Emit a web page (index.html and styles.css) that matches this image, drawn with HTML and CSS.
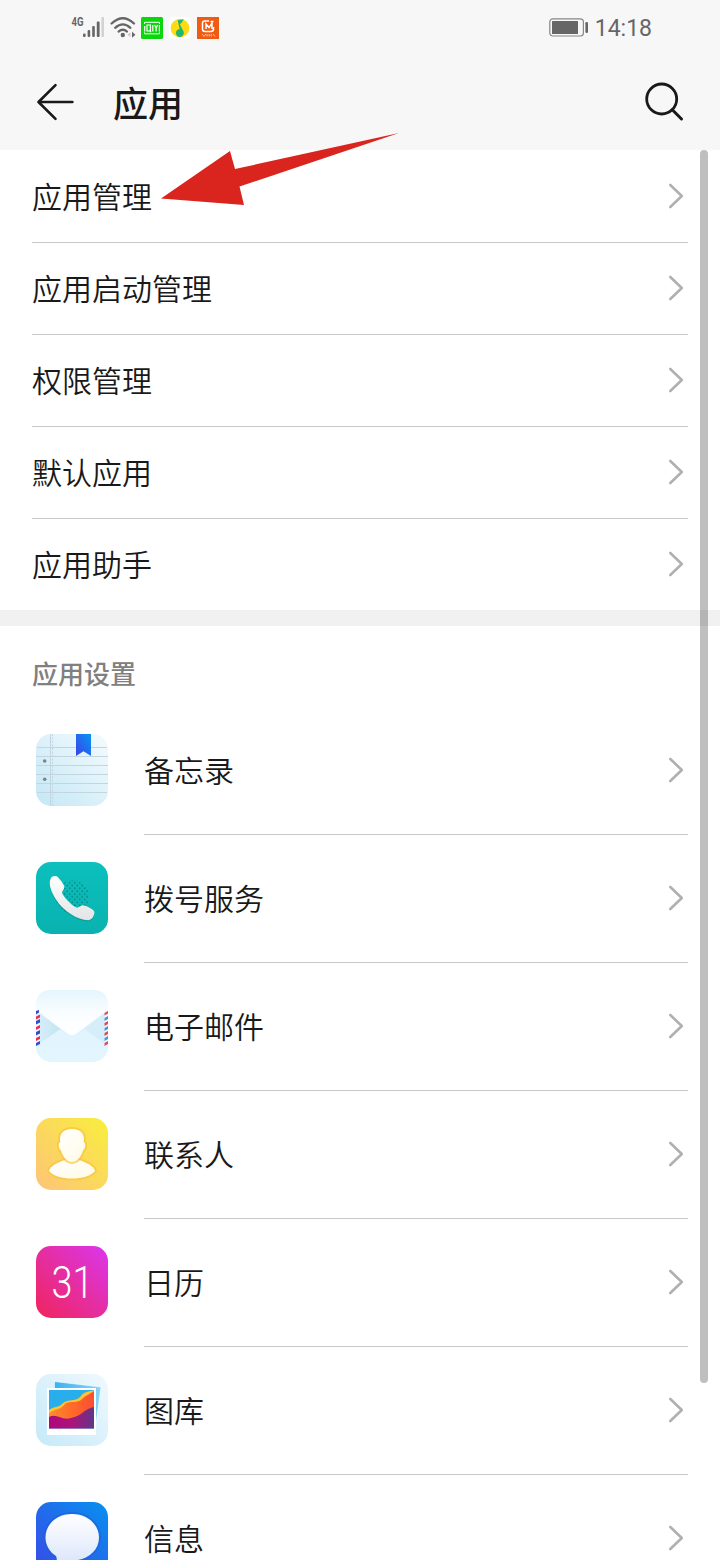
FILE: index.html
```html
<!DOCTYPE html>
<html lang="zh-CN">

<head>
    <meta charset="UTF-8">
    <meta name="viewport" content="width=device-width, initial-scale=1.0">
    <title>应用</title>
    <link rel="stylesheet" href="styles.css">
</head>

<body>
    <svg class="defs" width="0" height="0">
        <symbol id="chevron" viewBox="0 0 16 26">
            <path d="M2.3 2 L13.8 13 L2.3 24" fill="none" stroke="#b0b0b0" stroke-width="2.6" stroke-linecap="round" stroke-linejoin="round" />
        </symbol>
    </svg>

    <div class="screen">
        <header class="top">
            <div class="status-bar">
                <svg class="signal" width="36" height="28" viewBox="0 -4 36 28">
                    <text x="1.5" y="10" textLength="12" lengthAdjust="spacingAndGlyphs">4G</text>
                    <g fill="#666">
                        <rect x="13" y="17.5" width="2.6" height="3.5" rx="1" />
                        <rect x="17.6" y="14" width="2.6" height="7" rx="1" />
                        <rect x="22.2" y="10" width="2.6" height="11" rx="1" />
                        <rect x="26.8" y="5.5" width="2.8" height="15.5" rx="1" />
                        <rect x="31.4" y="1" width="2.6" height="20" rx="1" fill="#d2d2d2" />
                    </g>
                </svg>
                <svg class="wifi" width="27" height="24" viewBox="0 0 27 24">
                    <g fill="none" stroke="#666" stroke-width="2.3" stroke-linecap="round">
                        <path d="M1.6 7.5 Q12.8 -3 24 7.5" />
                        <path d="M5.2 11.8 Q12.8 5 20.4 11.8" />
                        <path d="M8.6 15.6 Q12.8 12 17 15.6" />
                    </g>
                    <circle cx="12.8" cy="19" r="2.2" fill="#666" />
                    <path d="M20.4 16.3v5l-3-2.5z" fill="#ccc" />
                    <path d="M22 15.8v6l3.4-3z" fill="#666" />
                </svg>
                <svg class="app-badge" width="22" height="22" viewBox="0 0 22 22">
                    <rect width="22" height="22" rx="1.5" fill="#0bd60b" />
                    <path d="M3.5 7V5.3H18.5V7M18.5 15.3v1.5H3.5v-1.5" fill="none" stroke="#fff" stroke-width="1" />
                    <path d="M3.7 9v5.5M6 8h3.4v6H6zM8.6 13l1.4 2.3M11.8 8v6.5M13.6 8l1.5 3 1.5-3M15.1 11v3.5M18.4 8v6.5" fill="none" stroke="#fff" stroke-width="1.2" />
                </svg>
                <svg class="app-badge" width="22" height="22" viewBox="0 0 22 22">
                    <rect width="22" height="22" rx="3" fill="#fff" />
                    <circle cx="11" cy="11" r="9.3" fill="#fddc12" />
                    <path d="M8.7 3.2 14.8 2.3 12.8 5.6 10.9 7.2 14 13.5A4 4 0 1 1 10.6 12z" fill="#22b573" />
                </svg>
                <svg class="app-badge" width="22" height="22" viewBox="0 0 22 22">
                    <rect width="22" height="22" fill="#f05a12" />
                    <path d="M12 4H7.5Q5.5 4 5.5 6V12Q5.5 14.5 8 14.5H14Q16.5 14.5 16.5 12V10" fill="none" stroke="#fff" stroke-width="1.5" />
                    <path d="M9 12V7l3 3.6L15 6.2V12M13.5 4.5h3" fill="none" stroke="#fff" stroke-width="1.5" />
                    <path d="M5 17l2 2.4M9 17l-2 2.4M10 17v2.5M12.2 17v2.5M14.2 17v2.5M16 17l2 2.5" stroke="#ffd0b5" stroke-width=".9" />
                </svg>
                <svg class="battery" width="40" height="20" viewBox="0 0 40 20">
                    <rect x=".8" y=".8" width="33.6" height="17.2" rx="3" fill="none" stroke="#888" stroke-width="1.2" />
                    <rect x="3" y="3" width="26" height="13" rx=".6" fill="#666" />
                    <rect x="36.4" y="4" width="2.6" height="11" rx="1.2" fill="#666" />
                </svg>
                <span class="time">14:18</span>
            </div>
            <div class="title-bar">
                <svg class="back" width="40" height="40" viewBox="0 0 40 40">
                    <path d="M19.5 3.2 2.5 20 19.5 36.8M2.8 20H36.4" fill="none" stroke="#191919" stroke-width="2.6" stroke-linecap="round" stroke-linejoin="round" />
                </svg>
                <h1>应用</h1>
                <svg class="search" width="40" height="40" viewBox="0 0 40 40">
                    <circle cx="17.7" cy="17" r="15" fill="none" stroke="#191919" stroke-width="2.8" />
                    <path d="M28.3 27.8 37.5 37" stroke="#191919" stroke-width="3" stroke-linecap="round" />
                </svg>
            </div>
        </header>

        <ul class="menu">
            <li><span>应用管理</span><svg class="chevron"><use href="#chevron" /></svg></li>
            <li><span>应用启动管理</span><svg class="chevron"><use href="#chevron" /></svg></li>
            <li><span>权限管理</span><svg class="chevron"><use href="#chevron" /></svg></li>
            <li><span>默认应用</span><svg class="chevron"><use href="#chevron" /></svg></li>
            <li><span>应用助手</span><svg class="chevron"><use href="#chevron" /></svg></li>
        </ul>

        <div class="separator"></div>

        <h2>应用设置</h2>

        <ul class="apps">
            <li>
                <!-- notepad -->
                <svg class="app-icon" viewBox="0 0 72 72">
                    <defs>
                        <linearGradient id="note" x1="1" y1="0" x2="0" y2="1">
                            <stop offset="0" stop-color="#f5fbfe" />
                            <stop offset="1" stop-color="#c3e7f6" />
                        </linearGradient>
                        <linearGradient id="mark" x1="1" y1="0" x2="0" y2="1">
                            <stop offset="0" stop-color="#0795f2" />
                            <stop offset="1" stop-color="#3b42ea" />
                        </linearGradient>
                    </defs>
                    <rect width="72" height="72" rx="15" fill="url(#note)" />
                    <path d="M1 13.5H71M0 22.5H72M0 31.5H72M0 40.5H72M0 49.5H72M1 58.5H71" stroke="#c3d6df" />
                    <path d="M14.5 0V72" stroke="#c3d6df" />
                    <path d="M16.5 0V72" stroke="#c3d6df" stroke-dasharray="2 1.5" />
                    <circle cx="8.7" cy="27" r="1.8" fill="#74878f" />
                    <circle cx="8.7" cy="45.2" r="1.8" fill="#74878f" />
                    <path d="M40 0H55V22L47.5 17.3 40 22z" fill="url(#mark)" />
                </svg>
                <div class="app-row"><span>备忘录</span><svg class="chevron"><use href="#chevron" /></svg></div>
            </li>
            <li>
                <!-- phone -->
                <svg class="app-icon" viewBox="0 0 72 72">
                    <defs>
                        <linearGradient id="dial" x1="0" y1="0" x2="0" y2="1">
                            <stop offset="0" stop-color="#0cc0bd" />
                            <stop offset="1" stop-color="#09b2af" />
                        </linearGradient>
                        <linearGradient id="handset" x1="0" y1="0" x2="0" y2="1">
                            <stop offset="0" stop-color="#fff" />
                            <stop offset="1" stop-color="#e2e4e5" />
                        </linearGradient>
                        <pattern id="holes" width="5" height="5.6" patternUnits="userSpaceOnUse">
                            <circle cx="1.2" cy="1.2" r=".9" fill="#058886" />
                            <circle cx="3.7" cy="4" r=".9" fill="#058886" />
                        </pattern>
                        <path id="tel" d="M15 16C16 13.800 20 13.200 22 15.200C24.500 18 27 21 28.300 24.300C29 26.500 26.500 28.500 26 30.800C27 34 34 42.500 40.500 45.600C42.500 46.300 44.500 43 47 43.200C51 44 55.500 46.300 58 49C59.500 52 56.500 57.800 52.500 58.200C42 58.400 27 49 20 37.500C16 31 11.500 22 15 16Z" />
                    </defs>
                    <rect width="72" height="72" rx="15" fill="url(#dial)" />
                    <circle cx="36.5" cy="35" r="16.8" fill="url(#holes)" />
                    <use href="#tel" y="1.2" fill="#078f8c" opacity=".55" />
                    <use href="#tel" fill="url(#handset)" />
                </svg>
                <div class="app-row"><span>拨号服务</span><svg class="chevron"><use href="#chevron" /></svg></div>
            </li>
            <li>
                <!-- mail -->
                <svg class="app-icon" viewBox="0 0 72 72">
                    <defs>
                        <linearGradient id="mail" x1="0" y1="0" x2="0" y2="1">
                            <stop offset="0" stop-color="#dff4fd" />
                            <stop offset="1" stop-color="#e3f5fd" />
                        </linearGradient>
                        <linearGradient id="flap" x1="0" y1="0" x2="0" y2="1">
                            <stop offset="0" stop-color="#e4f6fe" />
                            <stop offset=".5" stop-color="#fafdff" />
                            <stop offset="1" stop-color="#fff" />
                        </linearGradient>
                        <linearGradient id="side">
                            <stop offset="0" stop-color="#d8eff9" />
                            <stop offset="1" stop-color="#c3e5f2" />
                        </linearGradient>
                    </defs>
                    <rect width="72" height="72" rx="15" fill="url(#mail)" />
                    <path d="M0 20.5L24.5 39L0 56z" fill="url(#side)" />
                    <path d="M72 20.5L48 39L72 56z" fill="#d5eef9" />
                    <path d="M0 20.5V15Q0 0 15 0H57Q72 0 72 15V20.5L40 44.5Q36 47.5 32 44.5z" fill="url(#flap)" />
                    <path d="M0 20.5L32 44.5Q36 47.5 40 44.5L72 20.5" fill="none" stroke="#cfeaf5" stroke-width=".6" />
                    <path d="M0 21H4V55H0zM68.5 20H72V56H68.5z" fill="#f3f8fd" />
                    <path d="M0 21l3-1v2.5l-3 2zM0 31l4-2v3.500l-4 2zM0 42l4-2v3.500l-4 2zM0 53l4-2v3l-4 2z" fill="#2f4fd0" />
                    <path d="M0 26.500l4-2v3l-4 2zM0 37l4-2v3l-4 2zM0 48l4-2v3l-4 2z" fill="#ee2c5b" />
                    <path d="M68.500 23l3.500-2v2.500l-3.500 2zM68.500 33l3.500-2v3l-3.500 2zM68.500 43l3.500-2v3l-3.500 2zM68.500 53l3.500-2v3l-3.500 2z" fill="#df4a5c" />
                    <path d="M68.500 28l3.500-2v3l-3.500 2zM68.500 38l3.500-2v3l-3.500 2zM68.500 48l3.500-2v3l-3.500 2z" fill="#429bd8" />
                </svg>
                <div class="app-row"><span>电子邮件</span><svg class="chevron"><use href="#chevron" /></svg></div>
            </li>
            <li>
                <!-- contacts -->
                <svg class="app-icon" viewBox="0 0 72 72">
                    <defs>
                        <linearGradient id="contact" x1="1" y1="0" x2="0" y2="1">
                            <stop offset="0" stop-color="#f8ee3c" />
                            <stop offset=".5" stop-color="#fbd95c" />
                            <stop offset="1" stop-color="#fec478" />
                        </linearGradient>
                        <linearGradient id="person" x1="0" y1="0" x2="1" y2="1">
                            <stop offset="0" stop-color="#fff" />
                            <stop offset="1" stop-color="#fffae5" />
                        </linearGradient>
                    </defs>
                    <rect width="72" height="72" rx="15" fill="url(#contact)" />
                    <g fill="url(#person)" stroke="#f7c63e" stroke-opacity=".7" stroke-width="4" stroke-linejoin="round" paint-order="stroke">
                        <path d="M13 53C14 47.500 23 44 29 42H43C49 44 58 47.500 59 53C54 58.500 46 60.500 36 60.500C26 60.500 18 58.500 13 53Z" />
                        <path d="M36 11C45 11 49 16 47.800 24.500C50 24 49.500 31 47 32.500C45.500 38 41.500 44 36 44C30.500 44 26.500 38 25 32.500C22.500 31 22 24 24.200 24.500C23 16 27 11 36 11Z" />
                    </g>
                </svg>
                <div class="app-row"><span>联系人</span><svg class="chevron"><use href="#chevron" /></svg></div>
            </li>
            <li>
                <!-- calendar -->
                <svg class="app-icon" viewBox="0 0 72 72">
                    <defs>
                        <linearGradient id="cal" x1="1" y1="0" x2="0" y2="1">
                            <stop offset=".05" stop-color="#dc35e6" />
                            <stop offset=".55" stop-color="#e62d9b" />
                            <stop offset="1" stop-color="#f0245c" />
                        </linearGradient>
                    </defs>
                    <rect width="72" height="72" rx="15" fill="url(#cal)" />
                    <text class="day" x="15.500" y="51.500" textLength="42" lengthAdjust="spacingAndGlyphs">31</text>
                </svg>
                <div class="app-row"><span>日历</span><svg class="chevron"><use href="#chevron" /></svg></div>
            </li>
            <li>
                <!-- gallery -->
                <svg class="app-icon" viewBox="0 0 72 72">
                    <defs>
                        <linearGradient id="gal" x1="1" y1="0" x2="0" y2="1">
                            <stop offset="0" stop-color="#f0f9fe" />
                            <stop offset="1" stop-color="#c5e9f8" />
                        </linearGradient>
                        <linearGradient id="back-photo">
                            <stop offset="0" stop-color="#39b2ef" />
                            <stop offset="1" stop-color="#8bd4f8" />
                        </linearGradient>
                        <linearGradient id="dune" x1="0" y1="0" x2="1" y2="0">
                            <stop offset="0" stop-color="#fd8e2c" />
                            <stop offset=".5" stop-color="#ff6b29" />
                            <stop offset="1" stop-color="#fb4d35" />
                        </linearGradient>
                        <linearGradient id="dusk">
                            <stop offset="0" stop-color="#ae077d" />
                            <stop offset=".5" stop-color="#ac1479" />
                            <stop offset="1" stop-color="#623588" />
                        </linearGradient>
                    </defs>
                    <rect width="72" height="72" rx="15" fill="url(#gal)" />
                    <path d="M18.500 7.500L65 13L60 50H18z" fill="url(#back-photo)" stroke="#fff" stroke-opacity=".6" />
                    <rect x="11" y="14" width="49" height="47" fill="#fff" />
                    <path d="M13 16H58V54.500H13z" fill="#27aeeb" />
                    <path d="M13 36C18 32 23 34 27 29C32 25 41 28 45 22C48 17 53 18 58 16V42L13 46z" fill="#ffc230" />
                    <path d="M13 39C19 35 24 36 29 30C34 26 42 30 46 25C50 21 54 20 58 17V42L13 48z" fill="url(#dune)" />
                    <path d="M13 43C21 39 26 47 35 44C46 42 48 35 58 33V54.500H13z" fill="url(#dusk)" />
                </svg>
                <div class="app-row"><span>图库</span><svg class="chevron"><use href="#chevron" /></svg></div>
            </li>
            <li>
                <!-- messages -->
                <svg class="app-icon" viewBox="0 0 72 72">
                    <defs>
                        <linearGradient id="msg" x1="1" y1="0" x2="0" y2="1">
                            <stop offset="0" stop-color="#0790ef" />
                            <stop offset="1" stop-color="#3a49e6" />
                        </linearGradient>
                        <linearGradient id="bubble" x1="0" y1="0" x2="0" y2="1">
                            <stop offset="0" stop-color="#fff" />
                            <stop offset="1" stop-color="#dbe5fb" />
                        </linearGradient>
                    </defs>
                    <rect width="72" height="72" rx="15" fill="url(#msg)" />
                    <path d="M36 12C51 12 63 22 63 35.500C63 49 51 58.500 36 58.500C31 58.500 25 62 19 62C21.500 60 21 56.500 20 54C13.500 50 9.500 43 9.500 35.500C9.500 22 21 12 36 12Z" fill="url(#bubble)" stroke="#1c5fd5" stroke-opacity=".5" stroke-width="4" paint-order="stroke" />
                </svg>
                <div class="app-row"><span>信息</span><svg class="chevron"><use href="#chevron" /></svg></div>
            </li>
        </ul>

        <div class="scrollbar"></div>
        <svg class="pointer" width="240" height="74" viewBox="0 0 240 74">
            <path d="M1 67.500L70 20L75 38L239 2L79.500 55.500L84 74z" fill="#da251e" />
        </svg>
    </div>
</body>

</html>
```
FILE: styles.css
```css
* {
    box-sizing: border-box;
}

body {
    margin: 0;
    background-color: #fff;
    color: #191919;
    font-family: "Noto Sans CJK SC", sans-serif;
}

ul {
    list-style: none;
    margin: 0;
    padding: 0;
}

.defs {
    display: block;
}

.screen {
    position: relative;
    width: 720px;
    height: 1560px;
    overflow: hidden;
}

.top {
    height: 150px;
    background-color: #f7f7f7;
}

.status-bar {
    display: flex;
    align-items: flex-start;
    height: 56px;
    padding: 16px 68px 0 70px;
}

.signal {
    margin-top: -4px;
}

.signal text {
    font-family: Roboto, sans-serif;
    font-size: 12.5px;
    font-weight: 700;
    fill: #666;
}

.wifi {
    margin-left: 4px;
    margin-right: 4px;
}

.app-badge {
    margin-top: 1px;
    margin-right: 6px;
}

.battery {
    margin-top: 2px;
    margin-left: auto;
}

.time {
    margin-left: 6px;
    color: #666;
    font-family: Roboto, sans-serif;
    font-size: 23px;
    line-height: 25px;
}

.title-bar {
    display: flex;
    align-items: center;
    height: 92px;
    padding: 0 36px;
}

h1 {
    flex: 1;
    margin: 0 0 0 37px;
    font-size: 35px;
    font-weight: 500;
    line-height: 50px;
}

.menu {
    padding: 0 32px;
}

.menu li {
    display: flex;
    align-items: center;
    justify-content: space-between;
    height: 92px;
    font-size: 30px;
    font-weight: 350;
}

.menu li + li {
    box-shadow: inset 0 1px #c8c8c8;
}

.menu span,
.app-row span {
    padding-bottom: 2px;
}

.chevron {
    width: 16px;
    height: 26px;
    margin-right: 4px;
}

.separator {
    height: 16px;
    background-color: #f1f1f1;
}

h2 {
    height: 81px;
    margin: 0;
    padding: 28px 32px 0;
    color: #808080;
    font-size: 26px;
    font-weight: 500;
    line-height: 38px;
}

.apps li {
    display: flex;
    height: 128px;
    padding: 0 32px 0 36px;
}

.app-icon {
    flex: none;
    width: 72px;
    height: 72px;
    margin: 27px 36px 0 0;
}

.app-row {
    display: flex;
    flex: 1;
    align-items: center;
    justify-content: space-between;
    padding-bottom: 2px;
    border-bottom: 1px solid #c8c8c8;
    font-size: 30px;
    font-weight: 350;
}

.day {
    fill: #fff;
    font-family: Roboto, sans-serif;
    font-size: 44px;
    font-weight: 300;
}

.scrollbar {
    position: absolute;
    top: 150px;
    right: 12px;
    width: 8px;
    height: 1233px;
    border-radius: 4px;
    background-color: rgba(0, 0, 0, 0.25);
}

.pointer {
    position: absolute;
    top: 131px;
    left: 160px;
}
```
